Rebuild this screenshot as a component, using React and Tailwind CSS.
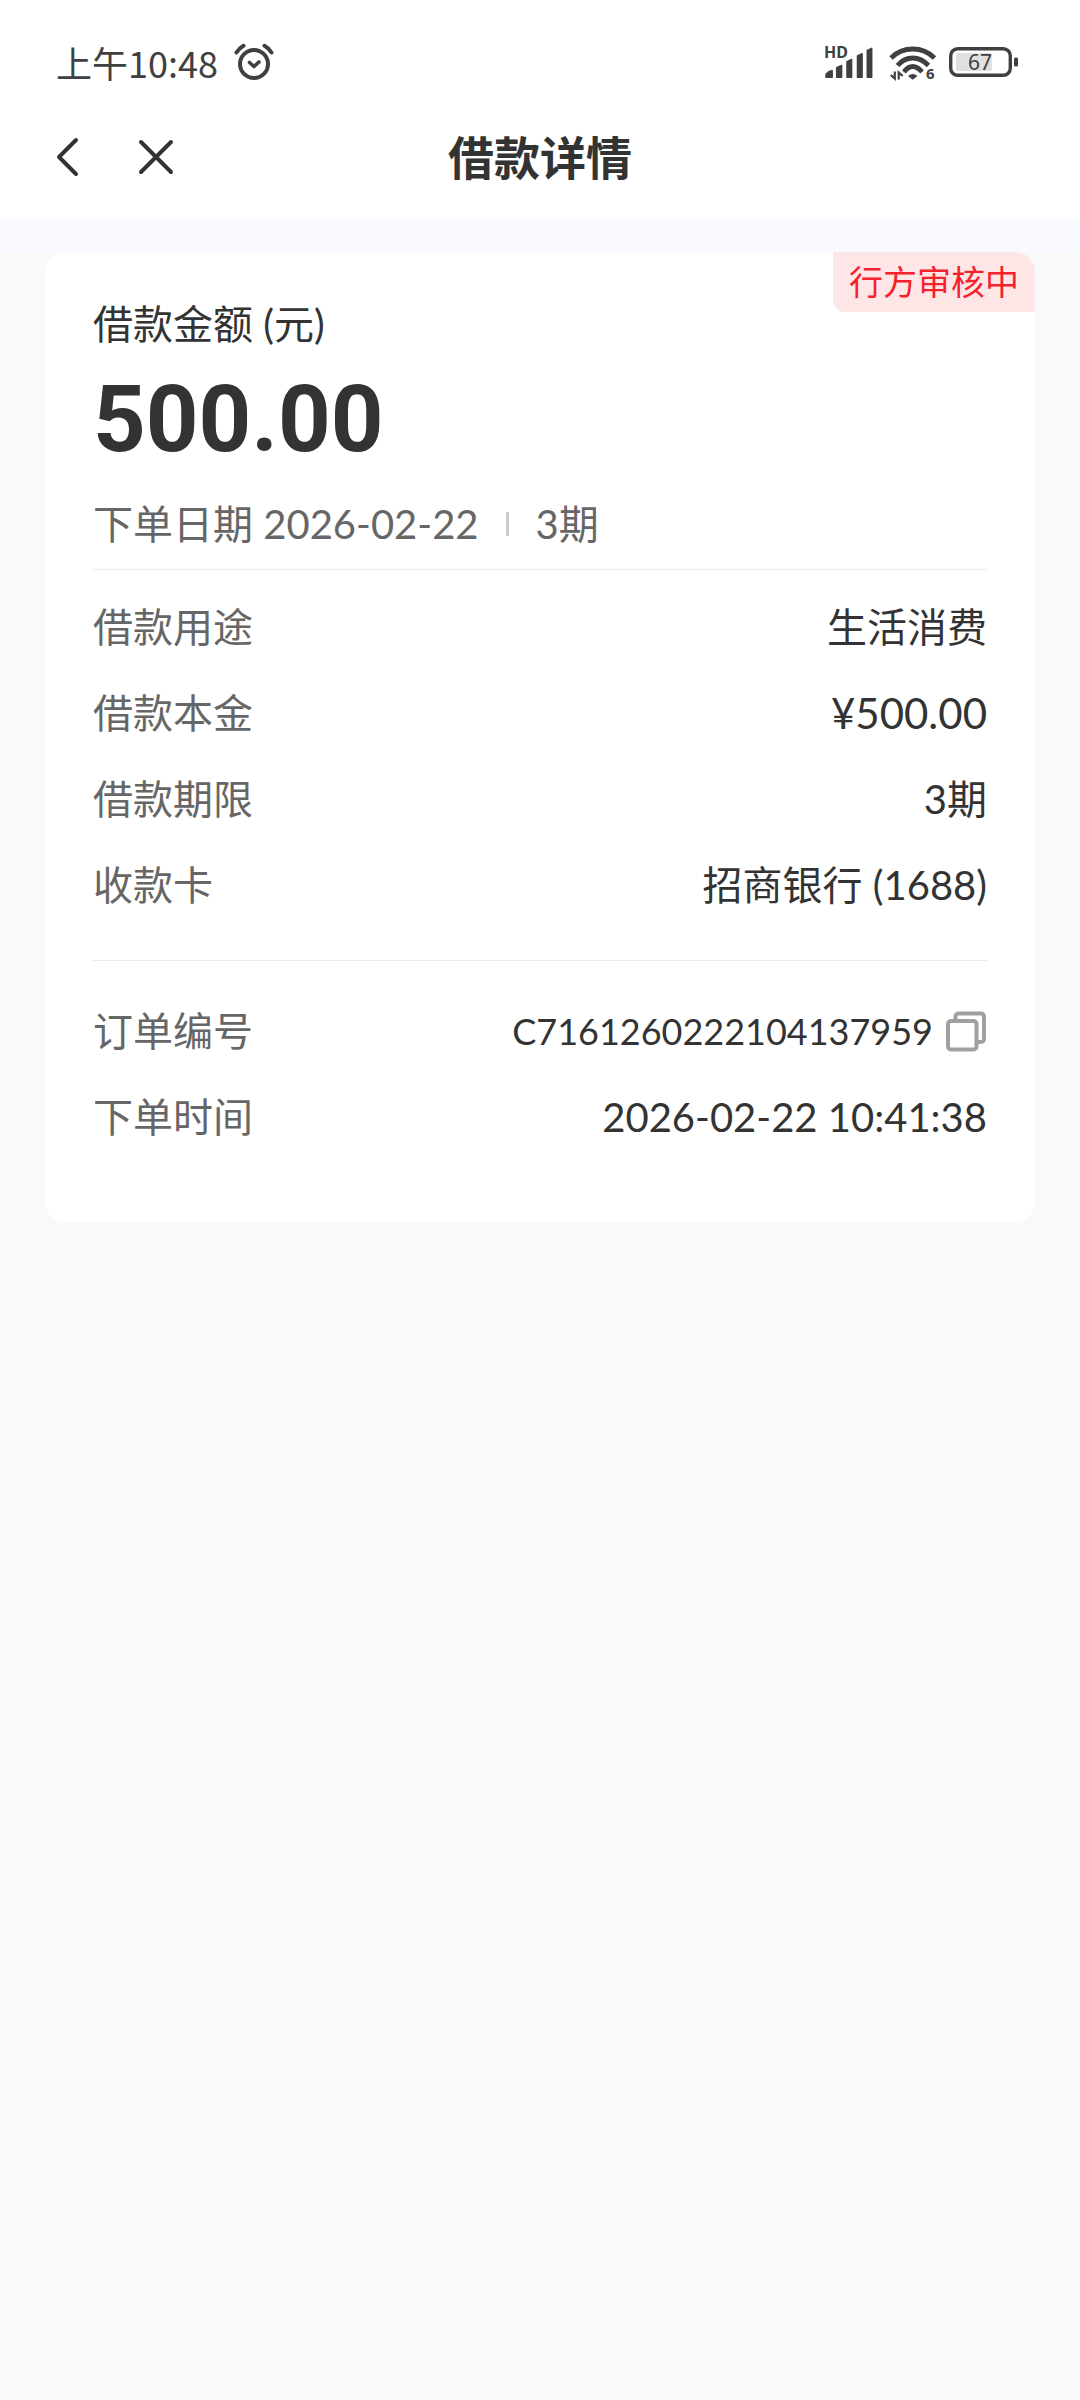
import React from "react";

const loanRows = [
  { label: "借款用途", value: "生活消费" },
  { label: "借款本金", value: "¥500.00", big: true },
  { label: "借款期限", value: "3期" },
  { label: "收款卡", value: "招商银行 (1688)" },
];

const order = {
  id: "C7161260222104137959",
  time: "2026-02-22 10:41:38",
};

const AlarmIcon = () => (
  <svg width="40" height="40" viewBox="0 0 40 40" fill="none" stroke="#404040">
    <circle cx="20" cy="22" r="14" strokeWidth="4" />
    <path d="M15.5 20.5l4.5 4 5-4.5" strokeWidth="3.6" strokeLinecap="round" strokeLinejoin="round" />
    <path d="M2.500 10.500Q5.500 6 9.500 3.800M37.500 10.500Q34.500 6 30.500 3.800" strokeWidth="4" strokeLinecap="round" />
  </svg>
);

const SignalIcon = () => (
  <svg width="52" height="44" viewBox="0 -4 52 44" fill="#404040">
    <text x="1" y="14" fontSize="16" fontWeight="700" fontFamily="Noto Sans, sans-serif">
      HD
    </text>
    <g stroke="#404040" strokeWidth="1.500" strokeLinejoin="round">
      <path d="M3 33.200v-3l3-2.700 3.200-.700v6.400z" />
      <path d="M13.700 33.200v-9.500l4.900-2.200v11.700z" />
      <path d="M24 33.200v-15.500l4.600-2.200v17.700z" />
      <path d="M34.500 33.200V12l4.600-2.200v23.400z" />
      <path d="M44.300 33.200V6.500l4.400-2.200v28.900z" />
    </g>
  </svg>
);

const WifiIcon = () => (
  <svg width="50" height="44" viewBox="0 -4 50 44" fill="none" stroke="#404040">
    <path d="M4 14Q13 5 25.700 5T47.500 14" strokeWidth="4.800" />
    <path d="M10.500 21.500Q17 14 25.700 14T41.500 21.500" strokeWidth="4.800" />
    <path d="M17 28Q21 22.500 25.700 22.500T35 28" strokeWidth="4.800" />
    <path d="M21 32q4.700-4 9.500 0l-4.800 3.800z" fill="#404040" stroke="none" />
    <path d="M7.800 27.500v7l-4-3.500M11.700 35.500v-7l4 3.500" strokeWidth="2.200" />
    <text x="39" y="35" fontSize="15" fontWeight="700" fontFamily="Noto Sans, sans-serif" fill="#404040" stroke="none">
      6
    </text>
  </svg>
);

const BatteryIcon = () => (
  <svg width="70" height="32" viewBox="0 0 70 32">
    <rect x="7" y="7" width="36" height="18" rx="2" fill="#e0e0e0" />
    <rect x="1.700" y="2.700" width="59.600" height="26.600" rx="7" fill="none" stroke="#404040" strokeWidth="3.400" />
    <rect x="65" y="11.500" width="4" height="9" rx="1.500" fill="#404040" />
    <text x="31" y="23.500" textAnchor="middle" fontSize="21" fontFamily="Noto Sans, sans-serif" fill="#404040">
      67
    </text>
  </svg>
);

const CopyIcon = () => (
  <svg width="42" height="42" viewBox="0 0 42 42" fill="none" stroke="#a0a0a0" strokeWidth="4">
    <path d="M10.500 11V6.500a3 3 0 0 1 3-3h22.500a3 3 0 0 1 3 3v22.500a3 3 0 0 1-3 3H32" />
    <rect x="3" y="11" width="28.500" height="28.500" rx="3" />
  </svg>
);

const Row = ({ label, children }) => (
  <div className="flex h-[86px] items-center justify-between">
    <dt className="text-[#666]">{label}</dt>
    <dd className="flex items-center">{children}</dd>
  </div>
);

const App = () => {
  const copyId = () => navigator.clipboard?.writeText(order.id);

  return (
    <div className="min-h-screen bg-[#f9f9f9] font-['Lato','Noto_Sans_CJK_SC',sans-serif] text-[40px] leading-[60px] text-[#333]">
      <header className="bg-white font-['Noto_Sans_CJK_SC',sans-serif]">
        {/* Status bar */}
        <div className="flex h-24 items-center justify-between pt-7 pr-[61px] pl-14">
          <div className="flex items-center gap-4 text-4xl text-[#404040]">
            <span>上午10:48</span>
            <AlarmIcon />
          </div>
          <div className="flex items-center gap-3">
            <SignalIcon />
            <WifiIcon />
            <BatteryIcon />
          </div>
        </div>

        {/* Title bar */}
        <div className="grid h-[121px] grid-cols-[1fr_auto_1fr] items-center px-12">
          <div className="flex items-center gap-9">
            <button aria-label="返回" className="flex size-12 items-center justify-center">
              <svg width="36" height="44" viewBox="0 0 36 44" fill="none" stroke="#333" strokeWidth="4" strokeLinecap="round" strokeLinejoin="round">
                <path d="M22 5L5 22l17 17" />
              </svg>
            </button>
            <button aria-label="关闭" className="flex size-12 items-center justify-center">
              <svg width="36" height="36" viewBox="0 0 36 36" fill="none" stroke="#333" strokeWidth="4" strokeLinecap="round">
                <path d="M3 3l30 30M33 3L3 33" />
              </svg>
            </button>
          </div>
          <h1 className="pb-1 text-[46px] font-semibold">借款详情</h1>
        </div>
      </header>

      <div className="h-[35px] bg-[#f9faff]" />

      <main className="relative mx-[45px] rounded-[20px] bg-white px-12 pt-[42px] pb-[62px]">
        <span className="absolute top-0 right-0 rounded-tr-[20px] rounded-bl-xl bg-[#ffe6e6] px-4 text-[34px] text-[#f5222d]">
          行方审核中
        </span>

        {/* Amount */}
        <p>借款金额 (元)</p>
        <p className="font-['Roboto',sans-serif] text-[92px] leading-[132px] font-bold">500.00</p>
        <p className="flex h-[83px] items-center pb-2 text-[#666]">
          下单日期 2026-02-22
          <span className="mx-[27px] h-6 w-[3px] bg-[#ccc]" />
          3期
        </p>

        <dl className="border-t border-[#ebebeb] pt-[14px] pb-8">
          {loanRows.map((row) => (
            <Row key={row.label} label={row.label}>
              <span className={row.big ? "text-[42px]" : ""}>{row.value}</span>
            </Row>
          ))}
        </dl>

        <dl className="border-t border-[#ebebeb] pt-[27px]">
          <Row label="订单编号">
            <span className="text-4xl">{order.id}</span>
            <button aria-label="复制订单编号" onClick={copyId} className="ml-3">
              <CopyIcon />
            </button>
          </Row>
          <Row label="下单时间">{order.time}</Row>
        </dl>
      </main>
    </div>
  );
};

export default App;
